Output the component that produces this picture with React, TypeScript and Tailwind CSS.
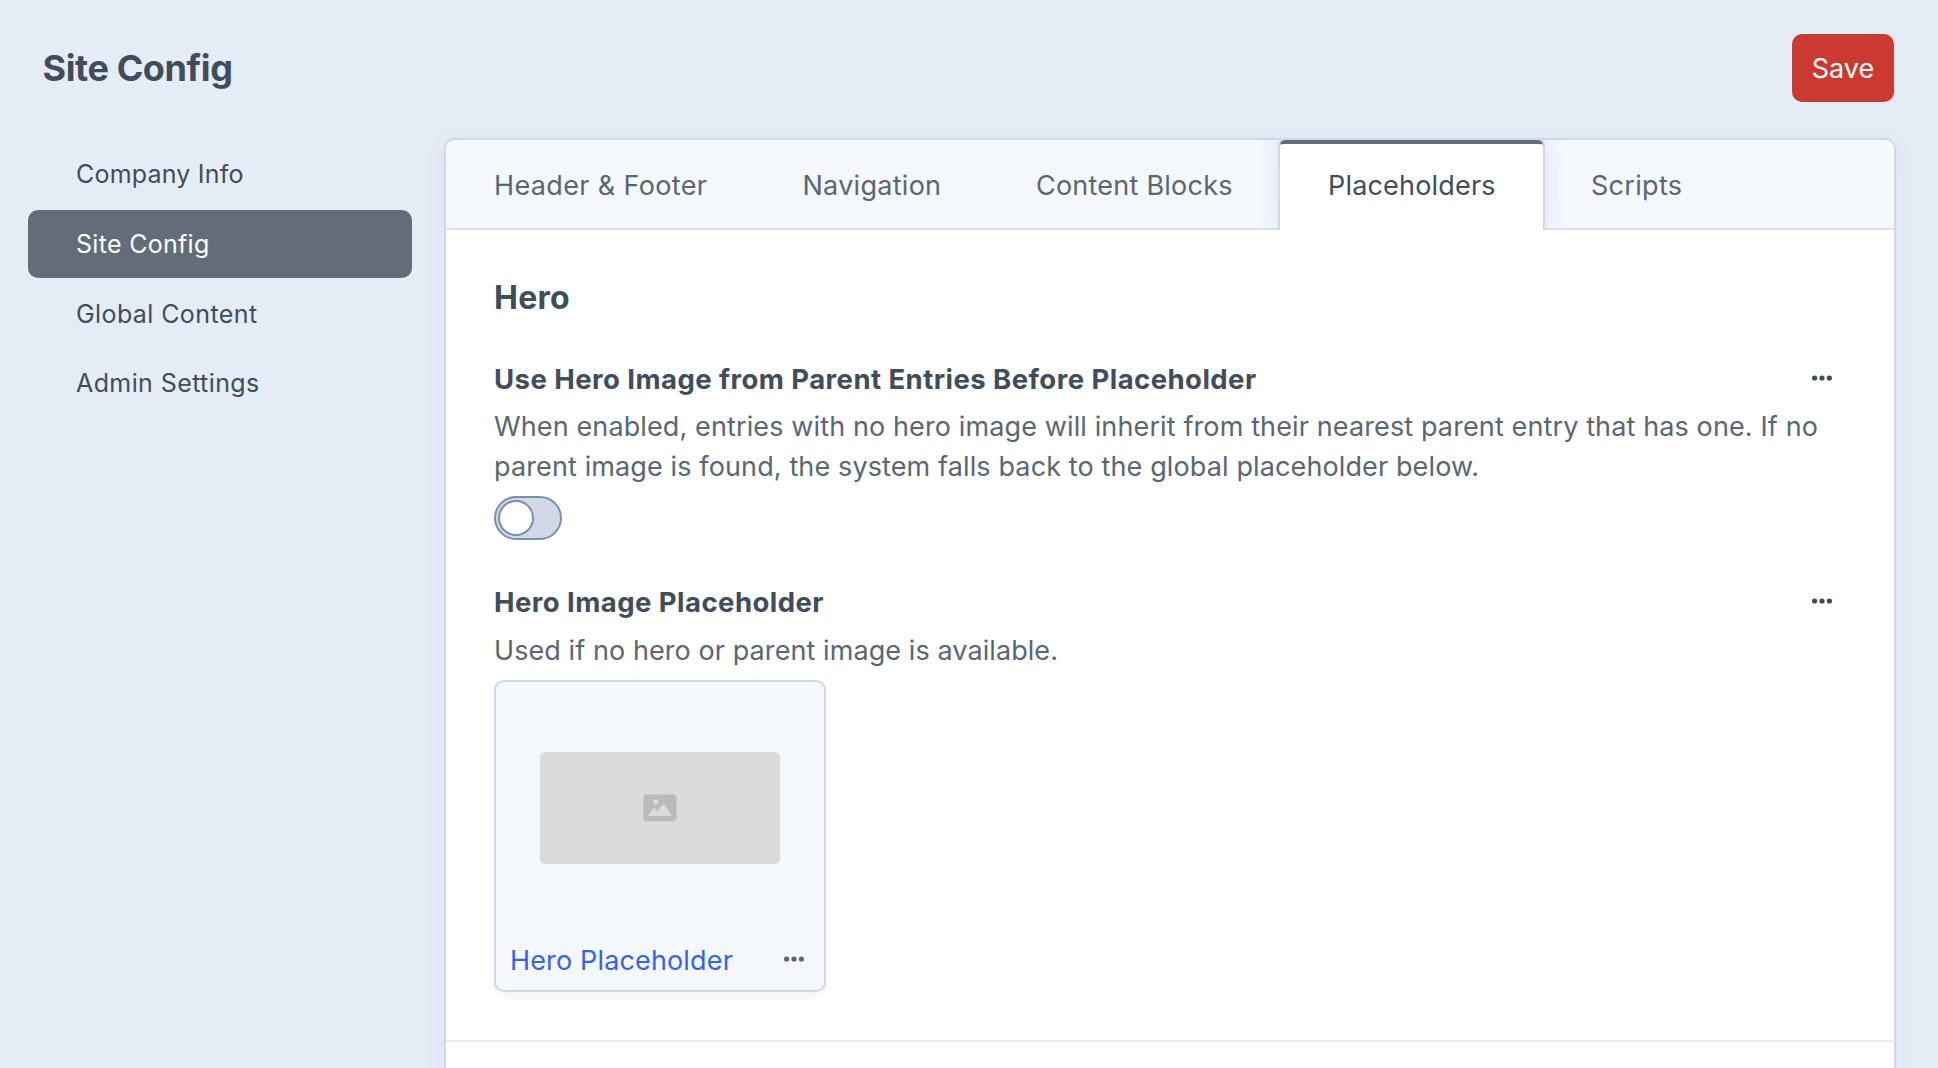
const sidebarItems = [
  { label: 'Company Info', tracking: 'tracking-[0.2px]' },
  { label: 'Site Config', active: true, tracking: 'tracking-[0.3px]' },
  { label: 'Global Content', tracking: 'tracking-[0.4px]' },
  { label: 'Admin Settings', tracking: 'tracking-[0.4px]' },
];

const tabs = [
  { label: 'Header & Footer', box: 'w-[308px] tracking-[0.36px]' },
  { label: 'Navigation', box: 'w-[234px] pl-[48.5px] tracking-[0.28px]' },
  { label: 'Content Blocks', box: 'w-[292px] tracking-[0.23px]' },
  { label: 'Placeholders', active: true, box: 'w-[263px] tracking-[0.18px]' },
  { label: 'Scripts', box: 'tracking-[0.3px]' },
];

function Ellipsis({ className }: { className: string }) {
  return (
    <svg className={className} width="20" height="6" viewBox="0 0 20 6" fill="currentColor" aria-hidden="true">
      <circle cx="2.6" cy="3" r="2.6" />
      <circle cx="10" cy="3" r="2.6" />
      <circle cx="17.4" cy="3" r="2.6" />
    </svg>
  );
}

function FieldHeading({ label, dots }: { label: string; dots: string }) {
  return (
    <div className="flex h-10 items-center justify-between pr-3.5">
      <h3 className="text-[27.5px] leading-10 font-bold tracking-[0.45px] text-[#414d5a]">{label}</h3>
      <button className={dots} aria-label="Field actions">
        <Ellipsis className="block text-[#414d5a]" />
      </button>
    </div>
  );
}

function ImageGlyph() {
  return (
    <svg width="34" height="28" viewBox="0 0 34 28" aria-hidden="true">
      <rect x="0.3" y="0.5" width="33.2" height="26.8" rx="3.6" fill="#bababa" />
      <circle cx="12.7" cy="8" r="2.7" fill="#dbdbdb" />
      <path
        d="M5.6 20.6 10 14.7Q10.9 13.6 11.8 14.7L14 17.2 19.6 10.8Q20.5 9.9 21.3 10.8L28.4 20.6Q29 22 27.6 22H6.3Q5 22 5.6 20.6Z"
        fill="#dbdbdb"
      />
    </svg>
  );
}

export default function App() {
  return (
    <div className="flex h-[1068px] w-full flex-col overflow-hidden bg-[#e4ecf6] font-['Inter',sans-serif]">
      <header className="flex h-[138px] shrink-0 items-start justify-between pt-[34px] pr-11 pl-[42.5px]">
        <h1 className="text-[36px] leading-[68px] font-bold tracking-[-0.4px] text-[#414d5a]">Site Config</h1>
        <button className="h-[68px] w-[102px] rounded-[10px] bg-[#ca3a31] pt-0.5 text-[27px] text-white">Save</button>
      </header>

      <div className="flex flex-1">
        <nav className="flex w-[444px] shrink-0 flex-col gap-[1.7px] pt-0.5 pr-8 pl-7">
          {sidebarItems.map((item) => (
            <a
              key={item.label}
              className={`flex h-[68px] shrink-0 items-center rounded-[10px] pt-0.5 pl-12 text-[25px] ${item.tracking} ${
                item.active ? 'bg-[#636d79] text-white' : 'text-[#414d5a]'
              }`}
            >
              {item.label}
            </a>
          ))}
        </nav>

        <main className="h-[1000px] w-[1452px] shrink-0 rounded-[11px] border-2 border-[#cfd8e4] bg-white shadow-[0_4px_24px_rgba(31,60,95,0.06)]">
          <div className="flex h-[90px] overflow-hidden rounded-t-[9px] bg-[#f4f7fc] text-[27px] leading-[92px] whitespace-nowrap text-[#5b6673] shadow-[inset_0_-2px_0_#dde2e8]">
            {tabs.map((tab) => (
              <a
                key={tab.label}
                className={`h-[90px] shrink-0 pl-12 ${tab.box} ${
                  tab.active
                    ? 'relative rounded-t-[5px] bg-white text-[#414d5a] shadow-[0_0_0_2px_#cfd8e4,0_0_24px_rgba(31,60,110,0.14)]'
                    : ''
                }`}
              >
                {tab.active && (
                  <span className="absolute inset-x-0 top-0 h-2 rounded-t-[5px] border-t-4 border-[#636d79]" />
                )}
                {tab.label}
              </a>
            ))}
          </div>

          <section className="border-b-2 border-[#ebebeb] px-12 pt-12 pb-12">
            <h2 className="text-[32px] leading-10 font-bold tracking-[0.3px] text-[#414d5a]">Hero</h2>

            <div className="mt-[41px]">
              <FieldHeading label="Use Hero Image from Parent Entries Before Placeholder" dots="mb-[3px]" />
              <p className="mt-2 text-[27px] leading-10 tracking-[0.12px] whitespace-nowrap text-[#5b6673]">
                When enabled, entries with no hero image will inherit from their nearest parent entry that has one. If no
                <br />
                parent image is found, the system falls back to the global placeholder below.
              </p>
              <button
                role="switch"
                aria-checked="false"
                aria-label="Use hero image from parent entries"
                className="mt-[9px] flex h-11 w-[68px] items-center rounded-full border-2 border-[#7b90ab] bg-[#cfd8e4] pl-0.5"
              >
                <span className="h-9 w-9 rounded-full border-2 border-[#7b90ab] bg-white" />
              </button>
            </div>

            <div className="mt-[42px]">
              <FieldHeading label="Hero Image Placeholder" dots="mb-0.5" />
              <p className="mt-[9px] text-[27px] leading-10 tracking-[0.08px] text-[#5b6673]">
                Used if no hero or parent image is available.
              </p>
              <div className="mt-[9px] h-[312px] w-[332px] rounded-[10px] border-2 border-[#cfd8e4] bg-[#f4f7fc] shadow-[0_4px_12px_rgba(31,41,51,0.06)]">
                <div className="flex h-[252px] items-center justify-center">
                  <div className="flex h-28 w-60 items-center justify-center rounded-[5px] bg-[#dbdbdb]">
                    <ImageGlyph />
                  </div>
                </div>
                <div className="flex h-[52px] items-center justify-between pr-5 pl-3.5">
                  <a className="pt-0.5 text-[27px] leading-10 tracking-[0.15px] text-[#3563e9]">Hero Placeholder</a>
                  <button className="mb-0.5" aria-label="Asset actions">
                    <Ellipsis className="block text-[#5b6673]" />
                  </button>
                </div>
              </div>
            </div>
          </section>
        </main>
      </div>
    </div>
  );
}
